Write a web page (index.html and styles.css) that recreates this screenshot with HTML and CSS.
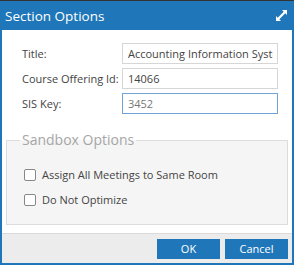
FILE: index.html
```html
<!DOCTYPE html>
<html lang="en">
<head>
  <meta charset="UTF-8">
  <title>Section Options</title>
  <link rel="stylesheet" href="styles.css">
</head>
<body>

<div class="dialog">
  <div class="dialog-header">
    <span class="dialog-title">Section Options</span>
    <svg class="expand" width="11" height="11" viewBox="0 0 11 11">
      <path d="M6 0h5v5L9.3 3.3 3.3 9.3 5 11H0V6l1.7 1.7 6-6z" fill="#fff"/>
    </svg>
  </div>

  <div class="dialog-body">
    <div class="form-row">
      <label>Title:</label>
      <input type="text" value="Accounting Information Systems">
    </div>
    <div class="form-row">
      <label>Course Offering Id:</label>
      <input type="text" value="14066">
    </div>
    <div class="form-row">
      <label>SIS Key:</label>
      <input type="text" class="focused" value="3452">
    </div>

    <fieldset class="sandbox">
      <legend>Sandbox Options</legend>
      <label class="check"><span class="box"></span>Assign All Meetings to Same Room</label>
      <label class="check"><span class="box"></span>Do Not Optimize</label>
    </fieldset>
  </div>

  <div class="dialog-footer">
    <button class="btn">OK</button>
    <button class="btn">Cancel</button>
  </div>
</div>

</body>
</html>
```

FILE: styles.css
```css
body {
  margin: 0;
  padding: 0;
  font-family: "Open Sans", sans-serif;
  color: #444;
  background: #333;
}
.dialog {
  width: 290px;
  height: 262px;
  margin-top: 1px;
  border: 2px solid #1f77b9;
  border-top: none;
  display: flex;
  flex-direction: column;
  background: #fff;
}
.dialog-header {
  background: #1f77b9;
  height: 29px;
  flex-shrink: 0;
  display: flex;
  align-items: center;
  justify-content: space-between;
  padding: 0 5px 0 3px;
}
.dialog-title {
  color: #fff;
  font-size: 13.5px;
}
.dialog-body {
  height: 190px;
  flex-shrink: 0;
  padding: 13px 4px 0 4px;
}
.form-row {
  display: flex;
  align-items: center;
  margin-bottom: 4px;
}
.form-row label {
  width: 100px;
  padding-left: 16px;
  font-size: 11px;
  white-space: nowrap;
}
.form-row input {
  width: 145px;
  height: 19px;
  border: 1px solid #d6d6d6;
  padding: 0 4px 0 5px;
  font-family: "Open Sans", sans-serif;
  font-size: 11px;
  color: #444;
  outline: none;
}
.form-row input.focused {
  border-color: #6ea3d4;
  color: #777;
}
.sandbox {
  margin: 16px 0 0 0;
  padding: 12px 13px 12px 13px;
  border: 1px solid #dcdcdc;
  background: #f5f5f5;
}
.sandbox legend {
  color: #a6a6a6;
  font-size: 14px;
  line-height: 20px;
  padding: 0 2px;
}
.check {
  display: flex;
  align-items: center;
  font-size: 11px;
  height: 25px;
  margin-left: 4px;
}
.box {
  width: 10px;
  height: 10px;
  border: 1px solid #888;
  border-radius: 2px;
  background: #fff;
  margin-right: 6px;
}
.dialog-footer {
  background: #ececec;
  border-top: 1px solid #dadada;
  flex: 1;
  display: flex;
  justify-content: flex-end;
  align-items: center;
  gap: 5px;
  padding-right: 4px;
}
.btn {
  width: 63px;
  height: 20px;
  padding: 0;
  background: #1f77b9;
  color: #fff;
  border: none;
  font-family: "Open Sans", sans-serif;
  font-size: 11px;
}
```
